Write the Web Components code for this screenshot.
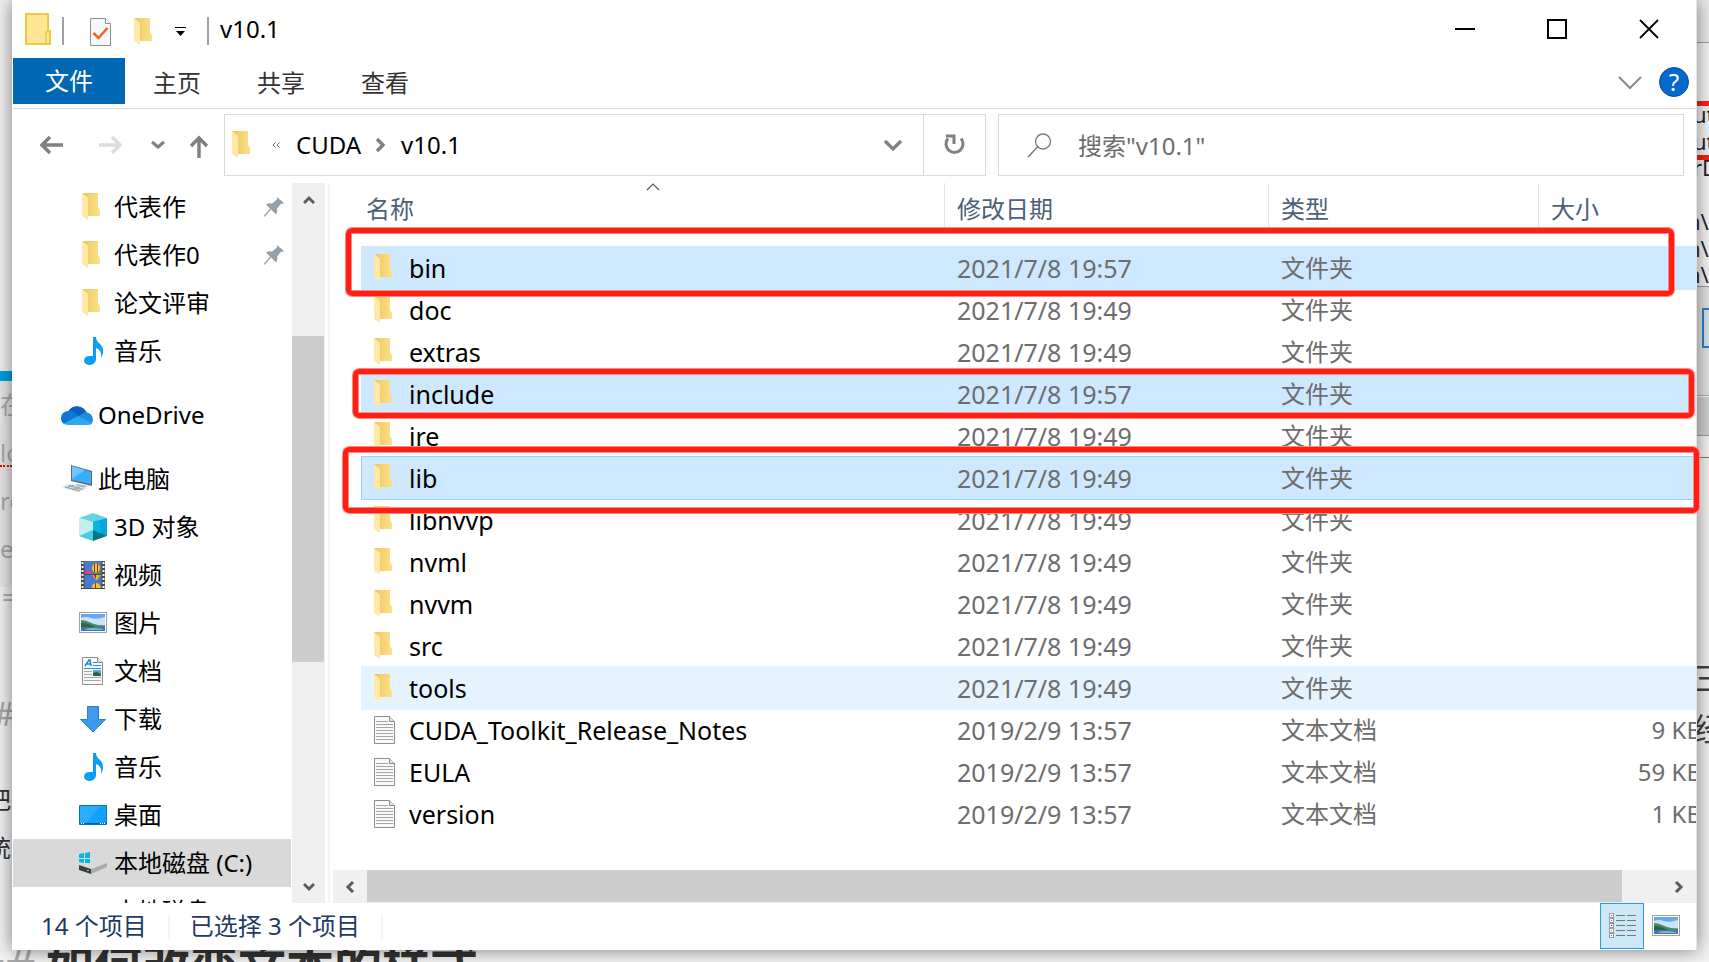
<!DOCTYPE html>
<html lang="zh-CN">
<head>
<meta charset="utf-8">
<title>v10.1</title>
<style>
html, body { margin: 0; height: 100%; }
body { font: 24px/32px "Noto Sans", "Noto Sans CJK SC", sans-serif; color: #000; background: #f3f3f3; overflow: hidden; }
</style>
</head>
<body>
<desk-top></desk-top>
<script>
const svg = (w, h, body) => `<svg width="${w}" height="${h}" viewBox="0 0 ${w} ${h}" aria-hidden="true">${body}</svg>`;
const photo = (x, y) => `<g transform="translate(${x} ${y})"><rect x=".5" y=".5" width="27" height="20" fill="#fff" stroke="#a0a0a0"/><path d="M2 2h24v17H2z" fill="#6aa5f5"/><path d="M2 6q5-2 10 0t14-1v8H2z" fill="#c9e4fa"/><path d="M2 8q4 0 8 2t9 3l7 1v1H2z" fill="#4d8a5c"/><path d="M2 11q6 0 10 2l4 2H2z" fill="#2e6445"/><path d="M2 15h24v4H2z" fill="#3f78ad"/><path d="M6 17q8-2 18 0v1H8z" fill="#7db4d8"/></g>`;
const sheet = '<path d="M3.500 .5h15l5 5v22h-20z" fill="#f8f9fa" stroke="#8c8c8c"/><path d="M18.500 .5v5h5" fill="#e4e4e4" stroke="#8c8c8c"/>';
const ICONS = {
  folder: svg(28, 28, '<defs><linearGradient id="g" x1="0" x2="1"><stop offset=".2" stop-color="#eecb6a"/><stop offset="1" stop-color="#ffe088"/></linearGradient></defs><path d="M3 0h16v14l2 3v6H3z" fill="url(#g)"/><path d="M3 0l5 4q1 1 1 3v20l-6-4z" fill="#ffe9a4"/>'),
  text: svg(28, 28, sheet + '<path d="M5 5h12M5 8h17M5 11h17M5 14h17M5 17h17M5 20h17M5 23h17" stroke="#a6a6a6" transform="translate(0 .5)"/>'),
  document: svg(28, 28, sheet + '<path d="M6 9l4-6h1l1 6M8 7h4" fill="none" stroke="#1d86c6" stroke-width="1.500"/><path d="M14 5.500h4M14 8.500h8M5 11.500h17" stroke="#2492d1"/><path d="M5 14.500h8M5 17.500h8M5 20.500h17M5 23.500h17" stroke="#a6a6a6"/><path d="M14 13h8v6h-8z" fill="#5ea2d6"/><path d="M14 16l4-1 4 2v2h-8z" fill="#2c5c50"/>'),
  music: svg(28, 30, '<path d="M14 1h3q0 4 4 7 5 5 2 12l-1 1q1-7-5-9v11q0 5-6 6-5 0-6-4 0-5 6-5h3z" fill="#0c9cf5"/>'),
  onedrive: svg(32, 22, '<path d="M7 8a10 10 0 0 1 17-2l3 4-11 5z" fill="#0a5fba"/><path d="M7 7q-7 1-7 7 0 4 3 6l15-8q-6-6-11-5z" fill="#0f78d4"/><path d="M16 13l8-5q8 1 8 8 0 3-3 5z" fill="#1b8fe2"/><path d="M3 20l14-8q4 2 14 7-2 2-5 2H8q-3 0-5-1z" fill="#2ba9ee"/>'),
  pc: svg(32, 28, '<path d="M10 0l21 6v15l-21-5z" fill="#5a6a78"/><path d="M11 1l19 6v12l-19-4z" fill="#38aefa"/><path d="M11 1l13 4-13 9z" fill="#6cc5fc"/><path d="M16 19l11 2-5 2-8-2z" fill="#a8b4bf"/><path d="M1 22l8-3 17 4-9 4z" fill="#d5dade"/><path d="M4 22l15 4M8 20.500l14 4M5 23l8-3M11 25l8-3" stroke="#98a2ab" fill="none"/>'),
  cube: svg(28, 28, '<path d="M14 0l14 5-14 5L0 5z" fill="#62d3e0"/><path d="M0 5l14 4v13L0 23z" fill="#c4eef0"/><path d="M28 5L14 9v13l14 1z" fill="#05a6dc"/><path d="M0 23l14-6v11z" fill="#48cde0"/><path d="M28 23l-14-6v11z" fill="#06748e"/><path d="M14 9l7-2v13l-7-3z" fill="#08b7de"/>'),
  video: svg(28, 28, '<path d="M2 0h24v28H2z" fill="#4a4a4a"/><path d="M5.500 0h17v13h-17zM5.500 14h17v13h-17z" fill="#4a78cc"/><path d="M3.500 1v26M24.500 1v26" stroke="#f4f4f4" stroke-width="2" stroke-dasharray="2 2"/><path d="M6 13q1-4 5-3l3 3z" fill="#e04a6a"/><path d="M19 12l3-2v3h-4z" fill="#2f9b4a"/><ellipse cx="17" cy="7" rx="4" ry="4.500" fill="#f4c81e"/><path d="M15 3h1v8h-1zM18 3h1v8h-1z" fill="#b5201c"/><path d="M13 14h9l-4 5h-1z" fill="#e8b21e"/><path d="M15 14h2v4z" fill="#9c1a1a"/><path d="M13 27q0-5 4-5t5 5z" fill="#f4c81e"/><path d="M16 22h1v5h-1z" fill="#b5201c"/>'),
  picture: svg(28, 22, photo(0, 0)),
  download: svg(28, 28, '<path d="M8.500 1.500h11v13h7L14 27 1.500 14.500h7z" fill="#3e9bea" stroke="#2c7fca"/>'),
  desktop: svg(28, 20, '<path d="M.5 .5h27v19H.5z" fill="#12a0fb" stroke="#0b72bd"/><path d="M1 1h20L7 18H1z" fill="#2cacff"/><path d="M1 18.500h26" stroke="#0b5f9e"/><path d="M2 18.500h3M21 18.500h5" stroke="#fff" stroke-dasharray="1 1"/>'),
  disk: svg(28, 24, '<path d="M0 15l16-6 12 4-16 7z" fill="#d9dadb"/><path d="M0 14l12 4v5L0 19z" fill="#3c3f42"/><path d="M12 18l16-6v4l-16 7z" fill="#a9abad"/><path d="M8 19.500h2" stroke="#5ee05a"/><path d="M0 3l5-1v5H0zM6 2l5-1v6H6zM0 8h5v4l-5-1zM6 8h5v4H6z" fill="#08b4ee"/>'),
  drive: svg(28, 24, '<path d="M0 15l16-6 12 4-16 7z" fill="#d9dadb"/><path d="M0 14l12 4v5L0 19z" fill="#3c3f42"/><path d="M12 18l16-6v4l-16 7z" fill="#a9abad"/>'),
  pin: svg(22, 22, '<path d="M14 1l7 6-2 1-1-.500-4 5q1 3-1 6l-5-5-6 7-1 0 0-1 6-7-4-4q3-2 6-1l5-4z" fill="#96a0a8"/>'),
  appfolder: svg(27, 32, '<path d="M1 1h22v17h2v13H1z" fill="#ffe695" stroke="#ecc843" stroke-width="2"/><path d="M21 31V19h3" fill="none" stroke="#ecc843" stroke-width="1.500"/>'),
  check: svg(22, 28, '<path d="M.5 .5h15l5 5v22H.5z" fill="#f6f7f9" stroke="#8e8e8e"/><path d="M15.500 .5v5h5" fill="#fff" stroke="#8e8e8e"/><path d="M3.500 15l5 5 9-10" fill="none" stroke="#f4611c" stroke-width="2.500"/>'),
  qat: svg(12, 10, '<path d="M0 .5h11" stroke="#000"/><path d="M1 4h9L5.500 9z"/>'),
  min: svg(20, 20, '<path d="M0 10h20" stroke="#000" stroke-width="2"/>'),
  max: svg(20, 20, '<path d="M1 1h18v18H1z" fill="none" stroke="#000" stroke-width="2"/>'),
  close: svg(20, 20, '<path d="M1 1l18 18M19 1L1 19" stroke="#000" stroke-width="1.800"/>'),
  expand: svg(24, 14, '<path d="M1 1l11 11L23 1" fill="none" stroke="#8a8a8a" stroke-width="2"/>'),
  help: svg(30, 30, '<circle cx="15" cy="15" r="14.500" fill="#0369cc" stroke="#154a80"/>'),
  back: svg(24, 20, '<path d="M2 10h21M10 2l-8 8 8 8" fill="none" stroke="#7f7f7f" stroke-width="3.400"/>'),
  forward: svg(24, 20, '<path d="M1 10h21M14 2l8 8-8 8" fill="none" stroke="#dcdcdc" stroke-width="3.400"/>'),
  recent: svg(14, 10, '<path d="M1 2l6 5 6-5" fill="none" stroke="#7f7f7f" stroke-width="3"/>'),
  up: svg(20, 24, '<path d="M10 23V2M2 11l8-8 8 8" fill="none" stroke="#7f7f7f" stroke-width="3.400"/>'),
  laquo: svg(8, 6, '<path d="M3.500 .5L1 3l2.500 2.500M7.500 .5L5 3l2.500 2.500" fill="none" stroke="#666"/>'),
  crumb: svg(12, 16, '<path d="M2 2l6 6-6 6" fill="none" stroke="#808080" stroke-width="3.400"/>'),
  drop: svg(20, 14, '<path d="M2 3l8 8 8-8" fill="none" stroke="#808080" stroke-width="3.200"/>'),
  refresh: svg(22, 22, '<path d="M17 4.500a8.500 8.500 0 1 1-13 0" fill="none" stroke="#808080" stroke-width="3"/><path d="M2 2h8v8" fill="none" stroke="#808080" stroke-width="3"/>'),
  search: svg(25, 25, '<circle cx="16" cy="8.500" r="7.500" fill="none" stroke="#777" stroke-width="1.300"/><path d="M10.500 14L1 24" stroke="#777" stroke-width="1.500"/>'),
  sort: svg(14, 8, '<path d="M1 7l6-6 6 6" fill="none" stroke="#555" stroke-width="1.200"/>'),
  arrow: svg(12, 12, '<path d="M1 9l5-5 5 5" fill="none" stroke="#5c5c5c" stroke-width="3"/>'),
  details: svg(28, 26, ['#2f6f8f', '#4f6f9f', '#b01818', '#9a9a70', '#3f7f6f'].map((c, i) => `<rect x="1.500" y="${i * 5 + .5}" width="4" height="4" fill="#fff" stroke="#9a9a9a"/><path d="M3 ${i * 5 + 2}h1v1H3z" fill="${c}"/><path d="M8 ${i * 5 + 2.5}h9M19 ${i * 5 + 2.5}h9" stroke="#777"/>`).join(''))
};

const RESET = `*{box-sizing:border-box} button{all:unset;box-sizing:border-box;display:flex;align-items:center;justify-content:center;cursor:default} a{color:inherit;text-decoration:none} svg{display:block;flex:none}`;
const define = (name, css, html) => customElements.define(name, class extends HTMLElement {
  constructor() {
    super();
    const body = typeof html === 'function' ? html(this) : html;
    this.attachShadow({ mode: 'open' }).innerHTML = `<style>${RESET}${css}</style>${body}`;
  }
});

define('ui-icon', `:host{display:flex;flex:none;align-items:center;justify-content:center}`, el => ICONS[el.getAttribute('name')]);

define('title-bar', `
:host{display:flex;align-items:center;height:58px;padding-left:12px}
.quick{display:flex;align-items:center;flex:1}
.sep{width:2px;height:28px;background:#a0a0a0;margin:4px 0 0 10px}
.quick button{margin-top:6px}
.check{margin-left:26px}.folder{margin-left:19px}.menu{margin-left:16px}
.menu+.sep{margin-left:20px}
h1{font:inherit;margin:0 0 0 11px}
.controls button{width:92px;height:58px}
.controls{display:flex;margin-right:1px}`, `
<div class="quick"><ui-icon name="appfolder"></ui-icon><span class="sep"></span>
<button class="check" aria-label="属性"><ui-icon name="check"></ui-icon></button>
<button class="folder" aria-label="新建文件夹"><ui-icon name="folder"></ui-icon></button>
<button class="menu" aria-label="自定义快速访问工具栏"><ui-icon name="qat"></ui-icon></button><span class="sep"></span>
<h1><slot></slot></h1></div>
<div class="controls"><button aria-label="最小化"><ui-icon name="min"></ui-icon></button><button aria-label="最大化"><ui-icon name="max"></ui-icon></button><button aria-label="关闭"><ui-icon name="close"></ui-icon></button></div>`);

define('ribbon-tabs', `
:host{display:flex;height:51px;border-bottom:1px solid #dadada;color:#333;padding-right:7px}
button{width:104px;height:50px}
.file{width:112px;height:46px;background:#0067b5;color:#fff}
.expand{margin:0 5px 0 auto;width:48px}
.help{width:30px;height:48px;display:grid;color:#fff}
.help>*{grid-area:1/1;text-align:center}`, `
<button class="file">文件</button><button>主页</button><button>共享</button><button>查看</button>
<button class="expand" aria-label="展开功能区"><ui-icon name="expand"></ui-icon></button>
<button class="help" aria-label="帮助"><ui-icon name="help"></ui-icon><span>?</span></button>`);

define('address-bar', `
:host{display:flex;height:62px;border:1px solid #d9d9d9;min-width:0}
.icon{margin:0 13px 0 4px}
.path{display:flex;align-items:center;flex:1}
.more{width:12px;margin-right:14px}
.crumb{width:40px;height:60px}
.drop{width:60px}
.refresh{width:62px;border-left:1px solid #d9d9d9}`, `
<div class="path"><ui-icon class="icon" name="folder"></ui-icon><button class="more" aria-label="上级位置"><ui-icon name="laquo"></ui-icon></button>
<button>CUDA</button><button class="crumb" aria-label="子文件夹"><ui-icon name="crumb"></ui-icon></button><button>v10.1</button></div>
<button class="drop" aria-label="以前的位置"><ui-icon name="drop"></ui-icon></button>
<button class="refresh" aria-label="刷新"><ui-icon name="refresh"></ui-icon></button>`);

define('search-box', `
:host{display:flex;align-items:center;height:62px;border:1px solid #d9d9d9;min-width:0;padding-left:28px}
input{flex:1;min-width:0;height:60px;border:0;outline:0;background:none;font:inherit;padding:0;margin-left:26px}
input::placeholder{color:#6d6d6d;opacity:1}`, `<ui-icon name="search"></ui-icon><input type="search" aria-label="搜索" placeholder='搜索"v10.1"'>`);

define('nav-bar', `
:host{display:flex;height:74px;padding:5px 12px 0 10px}
.moves{display:flex;width:201px;height:62px;flex:none;align-items:center}
.moves button{width:58px;height:62px}
.moves .recent{width:38px}.moves .up{width:44px;padding-top:4px}
address-bar{flex:760}search-box{flex:656;margin-left:12px}`, `
<div class="moves"><button aria-label="后退"><ui-icon name="back"></ui-icon></button><button aria-label="前进"><ui-icon name="forward"></ui-icon></button><button class="recent" aria-label="最近浏览的位置"><ui-icon name="recent"></ui-icon></button><button class="up" aria-label="上移"><ui-icon name="up"></ui-icon></button></div>
<address-bar></address-bar><search-box></search-box>`);

define('tree-item', `
:host{display:block}
:host([gap]){margin-top:16px}
a{display:flex;align-items:center;height:48px;padding-left:66px;white-space:nowrap}
.i{width:28px;margin-right:7px}
:host([root]) a{padding-left:48px}
:host([root]) .i{width:32px;margin-right:5px}
:host([selected]) a{background:#d9d9d9}
.pin{margin:0 6px 0 auto}`, el => `<a href="#"><ui-icon class="i" name="${el.getAttribute('icon')}"></ui-icon><span><slot></slot></span>${el.hasAttribute('pinned') ? '<ui-icon class="pin" name="pin"></ui-icon>' : ''}</a>`);

define('scroll-bar', `
:host{display:flex;background:#f0f0f0}
button{width:34px;height:33px;flex:none}
.track{flex:1;display:flex}
.thumb{background:#cdcdcd}
:host([vertical]){flex-direction:column;width:33px}
:host([vertical]) .track{flex-direction:column}
:host([vertical]) .thumb{margin-right:1px;flex:326}
:host([vertical]) .pre{flex:120}:host([vertical]) .post{flex:208}
:host([vertical]) .next ui-icon{transform:rotate(180deg)}
:host(:not([vertical])){height:33px}
:host(:not([vertical])) .thumb{margin-bottom:1px;flex:1255}
:host(:not([vertical])) .post{flex:40}
:host(:not([vertical])) .prev ui-icon{transform:rotate(-90deg)}
:host(:not([vertical])) .next ui-icon{transform:rotate(90deg)}`, `
<button class="prev" aria-label="向前滚动"><ui-icon name="arrow"></ui-icon></button><div class="track"><div class="pre"></div><div class="thumb"></div><div class="post"></div></div><button class="next" aria-label="向后滚动"><ui-icon name="arrow"></ui-icon></button>`);

define('nav-tree', `
:host{display:flex;width:317px;flex:none;border-right:2px solid #f5f5f5}
nav{flex:1;min-width:0;overflow:hidden}
scroll-bar{margin:0 3px 0 1px}`, `
<nav><slot></slot></nav><scroll-bar vertical></scroll-bar>`);

const FILES = [
  ['bin', '2021/7/8 19:57', 'sel'], ['doc', '2021/7/8 19:49'], ['extras', '2021/7/8 19:49'], ['include', '2021/7/8 19:57', 'sel'],
  ['jre', '2021/7/8 19:49'], ['lib', '2021/7/8 19:49', 'sel focus'], ['libnvvp', '2021/7/8 19:49'], ['nvml', '2021/7/8 19:49'],
  ['nvvm', '2021/7/8 19:49'], ['src', '2021/7/8 19:49'], ['tools', '2021/7/8 19:49', 'hover'],
  ['CUDA_Toolkit_Release_Notes', '2019/2/9 13:57', '', '9 KB'], ['EULA', '2019/2/9 13:57', '', '59 KB'], ['version', '2019/2/9 13:57', '', '1 KB']
];
define('file-list', `
:host{display:flex;flex-direction:column;flex:1;min-width:0;padding-left:3px}
.view{flex:1;min-height:0;overflow:hidden;padding-left:28px}
table{width:calc(100% + 20px);border-collapse:separate;border-spacing:0;table-layout:fixed}
th{font-weight:400;text-align:left;color:#4c607a;height:64px;padding:0;vertical-align:top}
th div{height:50px;line-height:52px;padding-left:12px;border-left:1px solid #e5e5e5;position:relative}
th:first-child div{padding-left:5px;border:0}
.sort{position:absolute;top:0;left:50%;transform:translateX(-50%)}
td{height:42px;line-height:42px;padding:0 0 0 13px;color:#6d6d6d;white-space:nowrap}
td:first-child{padding:0 0 0 10px;color:#000}
td:nth-child(-n+2){font-size:25px}
.name{display:flex;align-items:center}
.name ui-icon{width:28px;margin-right:10px}
td:last-child{text-align:right;padding:0 14px 0 0}
.sel td{background:#cde8ff;box-shadow:0 -1px #cde8ff,0 1px #cde8ff}
.focus td{box-shadow:0 -1px #99d1ff,0 1px #99d1ff}
.focus td:first-child{border-left:1px solid #99d1ff;padding-left:9px}
.hover td{background:#e5f3ff;box-shadow:0 -1px #e5f3ff,0 1px #e5f3ff}
.date{width:324px}.type{width:270px}.size{width:178px}`, `
<div class="view"><table><thead><tr><th><div>名称<ui-icon class="sort" name="sort"></ui-icon></div></th><th class="date"><div>修改日期</div></th><th class="type"><div>类型</div></th><th class="size"><div>大小</div></th></tr></thead>
<tbody>${FILES.map(([n, d, c, s]) => `<tr class="${c || ''}"><td><div class="name"><ui-icon name="${s ? 'text' : 'folder'}"></ui-icon>${n}</div></td><td>${d}</td><td>${s ? '文本文档' : '文件夹'}</td><td>${s || ''}</td></tr>`).join('')}</tbody></table></div>
<scroll-bar></scroll-bar>`);

define('status-bar', `
:host{display:flex;align-items:center;height:47px;padding-left:28px;color:#1f3a63}
span{padding-right:21px;margin-right:20px;border-right:2px solid #f3f3f3;height:24px;line-height:22px}
.views{margin-left:auto;display:flex;padding-right:8px;height:47px}
button{width:44px;height:46px}
.on{background:#cce8f6;border:1px solid #26a0da;}`, `
<span>14 个项目</span><span>已选择 3 个项目</span>
<div class="views"><button class="on" aria-label="详细信息"><ui-icon name="details"></ui-icon></button><button aria-label="大缩略图"><ui-icon name="picture"></ui-icon></button></div>`);

define('explorer-window', `
:host{display:flex;flex-direction:column;background:#fff;border:solid #e4e4e4;border-width:0 1px 0 0;padding-left:1px;box-shadow:0 0 18px rgba(0,0,0,.5)}
.body{display:flex;flex:1;min-height:0}`, `
<title-bar>v10.1</title-bar><ribbon-tabs></ribbon-tabs><nav-bar></nav-bar>
<div class="body"><nav-tree>
<tree-item icon="folder" pinned>代表作</tree-item><tree-item icon="folder" pinned>代表作0</tree-item><tree-item icon="folder">论文评审</tree-item><tree-item icon="music">音乐</tree-item>
<tree-item icon="onedrive" root gap>OneDrive</tree-item>
<tree-item icon="pc" root gap>此电脑</tree-item><tree-item icon="cube">3D 对象</tree-item><tree-item icon="video">视频</tree-item><tree-item icon="picture">图片</tree-item><tree-item icon="document">文档</tree-item><tree-item icon="download">下载</tree-item><tree-item icon="music">音乐</tree-item><tree-item icon="desktop">桌面</tree-item><tree-item icon="disk" selected>本地磁盘 (C:)</tree-item><tree-item icon="drive">本地磁盘 (D:)</tree-item>
</nav-tree><file-list></file-list></div>
<status-bar></status-bar>`);

/* The editor and the dialog that lie open behind the explorer window. */
define('back-windows', `
:host{display:block;overflow:hidden;color:#aaa}
div,span,h2{position:absolute;white-space:nowrap}
.code{left:0;top:381px;width:400px;height:206px;background:#e9e9e9}
.blue{left:0;top:371px;width:400px;height:10px;background:#00a2e4}
.dark{color:#333}
.mark{font-size:32px}
h2{font-size:48px;line-height:56px;margin:0;left:-28px;top:938px;color:#333}
h2 i{font-weight:400;color:#aaa;margin-right:12px}
.dialog{right:0;top:0;width:300px;height:458px;background:#f6f6f6;border-bottom:1px solid #777}
.head{right:0;top:0;width:300px;height:43px;background:#ececec;border-bottom:1px solid #a0a0a0}
.foot{right:0;top:286px;width:300px;height:110px;background:#e4e4e4;border-top:1px solid #9a9a9a;border-bottom:1px solid #b0b0b0}
.bar{right:0;top:397px;width:300px;height:39px;background:#d2d2d2;border-bottom:1px solid #a0a0a0}
.btn{right:-60px;top:308px;width:67px;height:40px;border:2px solid #2a84d0;background:#e0e0e0}
.red{right:0;width:14px;height:5px;background:#ff1f12}
.r{left:calc(100% - 16px);font-size:22px;line-height:26px;color:#1c2530}
.n{left:calc(100% - 22px)}
.big{font-size:32px;color:#444}
.wave{height:2px;border-bottom:2px dotted #f00}`, `
<div class="blue"></div><div class="code"></div>
<span style="left:0;top:389px">在</span><span style="left:0;top:437px">lo</span><div class="wave" style="left:0;top:465px;width:12px"></div>
<span style="left:0;top:485px">ro</span><span style="left:0;top:533px">e</span><span style="left:2px;top:581px">=</span>
<span class="mark" style="left:-6px;top:698px">##</span><span class="dark" style="left:-13px;top:784px">把</span><span class="dark" style="left:-13px;top:832px">统</span>
<h2><i>##</i>如何改变文本的样式</h2>
<div class="dialog"></div><div class="head"></div><div class="foot"></div><div class="bar"></div><div class="btn"></div>
<div class="red" style="top:101px"></div><div class="red" style="top:155px"></div>
<span class="r" style="top:101px">ut</span><span class="r" style="top:128px">ut</span><span class="r" style="top:154px">rD</span>
<span class="r n" style="top:208px">n\\</span><span class="r n" style="top:235px">n\\</span><span class="r n" style="top:261px">n\\</span>
<span class="r big" style="top:665px">三</span><span class="r big" style="top:716px">经</span>`);

define('mark-frame', `:host{display:block;position:absolute;border:5px solid #ff1f12;border-radius:6px;box-shadow:0 0 0 1px #ff8a84,inset 0 0 0 1px #ff8a84}`, '');

define('desk-top', `
:host{display:flex;flex-direction:column;position:relative;height:100vh;overflow:hidden}
back-windows{position:absolute;inset:0}
explorer-window{position:relative;flex:1;min-height:0;margin:0 12px 12px}
.bin{left:346px;right:35px;top:228px;height:68px}
.include{left:353px;right:15px;top:369px;height:49px}
.lib{left:343px;right:10px;top:447px;height:66px}`, `
<back-windows></back-windows><explorer-window></explorer-window>
<mark-frame class="bin"></mark-frame><mark-frame class="include"></mark-frame><mark-frame class="lib"></mark-frame>`);
</script>
</body>
</html>
